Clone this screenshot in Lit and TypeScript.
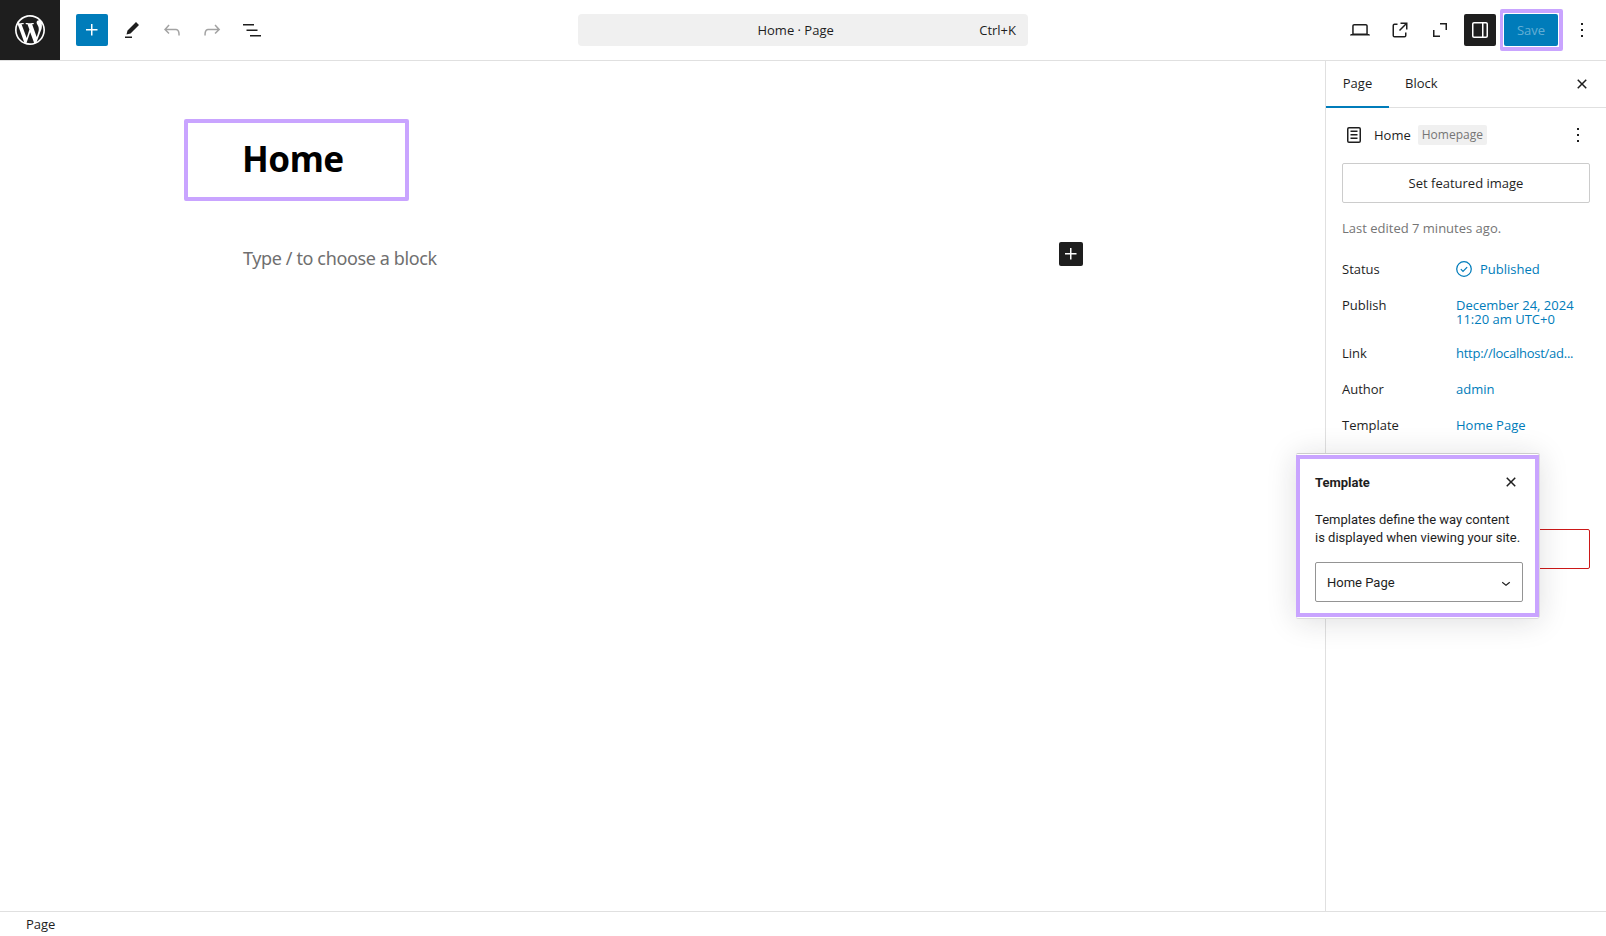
import { LitElement, html, css, svg } from "lit";
import { customElement } from "lit/decorators.js";

const P = {
  plus: "M11 12.5V17.5H12.5V12.5H17.5V11H12.5V6H11V11H6V12.5H11Z",
  pencil: "m19 7-3-3-8.5 8.5-1 4 4-1L19 7Zm-7 11.5H5V20h7v-1.5Z",
  undo: "M18.3 11.7c-.6-.6-1.4-.9-2.3-.9H6.7l2.9-3.3-1.1-1-4.5 5L8.5 16l1-1-2.7-2.7H16c.5 0 .9.2 1.3.5 1 1 1 3.4 1 4.5v.3h1.5v-.2c0-1.5 0-4.3-1.5-5.7z",
  redo: "M15.6 6.5l-1.1 1 2.9 3.3H8c-.9 0-1.7.3-2.3.9-1.4 1.5-1.4 4.2-1.4 5.6v.2h1.5v-.3c0-1.1 0-3.5 1-4.5.3-.3.7-.5 1.3-.5h9.2L14.5 15l1.1 1.1 4.6-4.6-4.6-5z",
  list: "M3 6h11v1.5H3V6Zm3.5 5.5h11V13h-11v-1.5ZM21 17H10v1.5h11V17Z",
  laptop: "M20.5 16h-.7V8c0-1.1-.9-2-2-2H6.2c-1.1 0-2 .9-2 2v8h-.7c-.8 0-1.5.7-1.5 1.5h20c0-.8-.7-1.5-1.5-1.5zM5.7 8c0-.3.2-.5.5-.5h11.6c.3 0 .5.2.5.5v7.6H5.7V8z",
  external: "M19.5 4.5h-7V6h4.44l-5.97 5.97 1.06 1.06L18 7.06v4.44h1.5v-7Zm-13 1a2 2 0 0 0-2 2v10a2 2 0 0 0 2 2h10a2 2 0 0 0 2-2v-3H17v3a.5.5 0 0 1-.5.5h-10a.5.5 0 0 1-.5-.5v-10a.5.5 0 0 1 .5-.5h3V5.5h-3Z",
  fullscreen: "M12 5h7v7h-1.5V6.5H12V5ZM5 12h1.5v5.5H12V19H5v-7Z",
  sidebar: "M18 4H6c-1.1 0-2 .9-2 2v12c0 1.1.9 2 2 2h12c1.1 0 2-.9 2-2V6c0-1.1-.9-2-2-2zM6 18.5c-.3 0-.5-.2-.5-.5V6c0-.3.2-.5.5-.5h8v13H6zm12.5-.5c0 .3-.2.5-.5.5h-2.5v-13H18c.3 0 .5.2.5.5v12z",
  more: "M13 19h-2v-2h2v2zm0-6h-2v-2h2v2zm0-6h-2V5h2v2z",
  close: "M12 13.06l3.712 3.713 1.061-1.06L13.061 12l3.712-3.712-1.06-1.06L12 10.938 8.288 7.227l-1.061 1.06L10.939 12l-3.712 3.712 1.06 1.061L12 13.061z",
  page: "M15.5 7.5h-7V9h7V7.5Zm-7 3.5h7v1.5h-7V11Zm7 3.5h-7V16h7v-1.5ZM17 4H7a2 2 0 0 0-2 2v12a2 2 0 0 0 2 2h10a2 2 0 0 0 2-2V6a2 2 0 0 0-2-2Zm0 1.5H7a.5.5 0 0 0-.5.5v12a.5.5 0 0 0 .5.5h10a.5.5 0 0 0 .5-.5V6a.5.5 0 0 0-.5-.5Z",
  chevron: "M17.5 11.6 12 16l-5.5-4.4.9-1.2L12 14l4.5-3.6 1 1.2z",
  wp: "M20 10c0-5.51-4.49-10-10-10C4.48 0 0 4.49 0 10c0 5.52 4.48 10 10 10 5.51 0 10-4.48 10-10zM7.78 15.37L4.37 6.22c.55-.02 1.17-.08 1.17-.08.5-.06.44-.76-.06-.76 0 0-1.45.11-2.37.11-.18 0-.37 0-.58-.01C4.12 2.69 6.87 1.11 10 1.11c2.33 0 4.45.87 6.05 2.34-.68-.11-1.65.39-1.65 1.58 0 .74.45 1.36.9 2.1.35.61.55 1.36.55 2.46 0 1.49-1.4 5-1.4 5l-3.03-8.37c.54-.02.82-.08.82-.08.5-.06.44-.8-.06-.77 0 0-1.44.12-2.38.12-.87 0-2.33-.12-2.33-.12-.5-.03-.56.75-.06.77l.92.08 1.26 3.41zM17.41 10c.24-.64.74-1.87.43-4.25.7 1.29 1.05 2.71 1.05 4.25 0 3.29-1.73 6.24-4.4 7.78.97-2.59 1.94-5.2 2.92-7.78zM6.1 18.09C3.12 16.65 1.11 13.53 1.11 10c0-1.3.23-2.48.72-3.59C3.25 10.3 4.67 14.2 6.1 18.09zm4.03-6.63l2.58 6.98c-.86.29-1.76.45-2.71.45-.79 0-1.57-.11-2.29-.33.81-2.38 1.62-4.74 2.42-7.1z",
};

const icon = (d: string, size = 24, view = 24) => html`<svg width=${size} height=${size} viewBox="0 0 ${view} ${view}" fill="currentColor" fill-rule="evenodd" aria-hidden="true">${svg`<path d=${d}></path>`}</svg>`;

@customElement("app-root")
export class AppRoot extends LitElement {
  static styles = css`
    :host { display: block; position: relative; width: 1606px; height: 936px; overflow: hidden; background: #fff; color: #1e1e1e; font: 13px/20px "Open Sans", sans-serif; }
    * { box-sizing: border-box; }
    button { font: inherit; color: inherit; background: none; border: 0; padding: 0; margin: 0; display: flex; align-items: center; justify-content: center; }
    .app { display: flex; flex-direction: column; height: 936px; }

    .top { flex: none; height: 61px; border-bottom: 1px solid #e0e0e0; display: grid; grid-template-columns: 1fr 450px 1fr; align-items: center; }
    .left, .right { display: flex; align-items: center; height: 60px; }
    .right { justify-content: flex-end; padding-right: 8px; }
    .logo { width: 60px; height: 60px; background: #1e1e1e; color: #fff; flex: none; }
    .adder { width: 32px; height: 32px; background: #007cba; color: #fff; border-radius: 2px; margin: 0 4px 0 16px; }
    .tool { width: 40px; height: 32px; }
    .muted { color: #a3a3a3; }
    .narrow { width: 32px; }
    .active { background: #1e1e1e; color: #fff; border-radius: 2px; margin-left: 4px; }
    .save-ring { border: 4px solid #c9a4ff; border-left-width: 3px; border-radius: 2px; padding: 1px; margin: 0 3px 0 4px; background: #fff; flex: none; }
    .save { width: 54px; height: 32px; background: #007cba; color: rgba(255,255,255,.4); border-radius: 2px; }
    .command { height: 32px; background: #f0f0f0; border-radius: 4px; display: flex; align-items: center; padding: 0 12px 0 34px; }
    .command .title { flex: 1; text-align: center; }

    .main { flex: 1; display: flex; min-height: 0; }
    .canvas { flex: 1; padding: 58px 0 0 184px; font-family: "Noto Sans", sans-serif; }
    .heading { width: 225px; height: 82px; border: 4px solid #c9a4ff; border-radius: 2px; margin: 0; padding: 0 0 4px 54px; display: flex; align-items: center; font-size: 35px; letter-spacing: -.5px; line-height: 1; font-weight: 700; color: #000; }
    .para { width: 840px; margin: 41px 0 0 59px; display: flex; align-items: center; justify-content: space-between; height: 24px; color: #6f6f6f; font-size: 18px; letter-spacing: -.38px; }
    .para .placeholder { position: relative; top: 4px; }
    .inserter { width: 24px; height: 24px; background: #1e1e1e; color: #fff; border-radius: 2px; }

    .side { flex: none; width: 281px; border-left: 1px solid #e0e0e0; }
    .tabs { height: 47px; border-bottom: 1px solid #e0e0e0; display: flex; align-items: stretch; }
    .tab { padding: 0 16px 3px; height: 47px; }
    .tab.on { border-bottom: 2px solid #007cba; width: 63px; padding-bottom: 1px; }
    .tab-close { margin-left: auto; width: 32px; margin-right: 8px; }
    .body { padding: 9px 16px 0 16px; }
    .doc { height: 36px; display: flex; align-items: center; }
    .doc-icon { display: flex; }
    .doc-name { margin: 0 7px 0 8px; }
    .badge { background: #f0f0f0; color: #757575; font-size: 12px; line-height: 20px; padding: 0 4px; border-radius: 2px; }
    .doc-more { margin-left: auto; width: 24px; height: 24px; }
    .featured { width: 100%; height: 40px; margin-top: 10px; border: 1px solid #ccc; border-radius: 2px; }
    .edited { color: #757575; margin: 15px 0 13px; }
    .row { display: flex; min-height: 36px; padding: 11px 0 9px; line-height: 14px; }
    .label { width: 114px; flex: none; }
    .value { color: #007cba; }
    .link { letter-spacing: -.25px; }
    .status { display: flex; align-items: center; gap: 6px; height: 14px; margin-left: -2px; }
    .trash { margin-top: 86px; height: 40px; border: 1px solid #cc1818; border-radius: 2px; width: 100%; }

    .foot { flex: none; height: 25px; border-top: 1px solid #e0e0e0; padding-left: 26px; display: flex; align-items: center; background: #fff; }

    .popover { position: absolute; left: 1296px; top: 453px; width: 243px; height: 165px; padding-top: 1px; border-top: 1px solid #ccc; border-radius: 2px; background: #fff; box-shadow: 0 1px 0 #ddd, 1px 0 0 #ddd, 0 3px 30px rgba(25,30,35,.15); font-family: Roboto, sans-serif; }
    .pop-inner { height: 162px; border: 4px solid #c9a4ff; padding: 0 12px 0 15px; }
    .pop-head { display: flex; align-items: center; justify-content: space-between; height: 36px; margin-top: 6px; }
    .pop-title { font-weight: 700; }
    .pop-close { width: 24px; height: 24px; margin-bottom: 2px; }
    .pop-text { margin: 10px 0 15px; line-height: 18px; white-space: nowrap; }
    .select { height: 40px; border: 1px solid #949494; border-radius: 2px; display: flex; align-items: center; justify-content: space-between; padding: 1px 7px 0 11px; }
  `;

  render() {
    return html`
      <div class="app">
        <header class="top">
          <div class="left">
            <button class="logo" aria-label="WordPress">${icon(P.wp, 30, 20)}</button>
            <button class="adder" aria-label="Add block">${icon(P.plus)}</button>
            <button class="tool" aria-label="Tools">${icon(P.pencil)}</button>
            <button class="tool muted" aria-label="Undo">${icon(P.undo)}</button>
            <button class="tool muted" aria-label="Redo">${icon(P.redo)}</button>
            <button class="tool" aria-label="List view">${icon(P.list)}</button>
          </div>
          <div class="command"><span class="title">Home · Page</span><span>Ctrl+K</span></div>
          <div class="right">
            <button class="tool" aria-label="View">${icon(P.laptop)}</button>
            <button class="tool" aria-label="View page">${icon(P.external)}</button>
            <button class="tool" aria-label="Fullscreen">${icon(P.fullscreen)}</button>
            <button class="tool narrow active" aria-label="Settings">${icon(P.sidebar)}</button>
            <div class="save-ring"><button class="save">Save</button></div>
            <button class="tool narrow" aria-label="Options">${icon(P.more)}</button>
          </div>
        </header>
        <div class="main">
          <main class="canvas">
            <h1 class="heading">Home</h1>
            <div class="para">
              <span class="placeholder">Type / to choose a block</span>
              <button class="inserter" aria-label="Add block">${icon(P.plus)}</button>
            </div>
          </main>
          <aside class="side">
            <div class="tabs">
              <button class="tab on">Page</button>
              <button class="tab">Block</button>
              <button class="tab-close" aria-label="Close">${icon(P.close)}</button>
            </div>
            <div class="body">
              <div class="doc">
                <span class="doc-icon">${icon(P.page)}</span>
                <span class="doc-name">Home</span>
                <span class="badge">Homepage</span>
                <button class="doc-more" aria-label="Actions">${icon(P.more)}</button>
              </div>
              <button class="featured">Set featured image</button>
              <div class="edited">Last edited 7 minutes ago.</div>
              <div class="row"><span class="label">Status</span><span class="value status"><svg width="20" height="20" viewBox="0 0 24 24" fill="none" stroke="currentColor" stroke-width="1.5"><circle cx="12" cy="12" r="8.75"></circle><path d="M8.2 12.2l2.6 2.6 5-5"></path></svg>Published</span></div>
              <div class="row"><span class="label">Publish</span><span class="value">December 24, 2024<br />11:20 am UTC+0</span></div>
              <div class="row"><span class="label">Link</span><span class="value link">http://localhost/ad...</span></div>
              <div class="row"><span class="label">Author</span><span class="value">admin</span></div>
              <div class="row"><span class="label">Template</span><span class="value">Home Page</span></div>
              <button class="trash" aria-label="Move to trash"></button>
            </div>
          </aside>
        </div>
        <footer class="foot">Page</footer>
      </div>
      <div class="popover">
        <div class="pop-inner">
          <div class="pop-head"><span class="pop-title">Template</span><button class="pop-close" aria-label="Close">${icon(P.close)}</button></div>
          <p class="pop-text">Templates define the way content<br />is displayed when viewing your site.</p>
          <div class="select"><span>Home Page</span>${icon(P.chevron, 18)}</div>
        </div>
      </div>
    `;
  }
}
